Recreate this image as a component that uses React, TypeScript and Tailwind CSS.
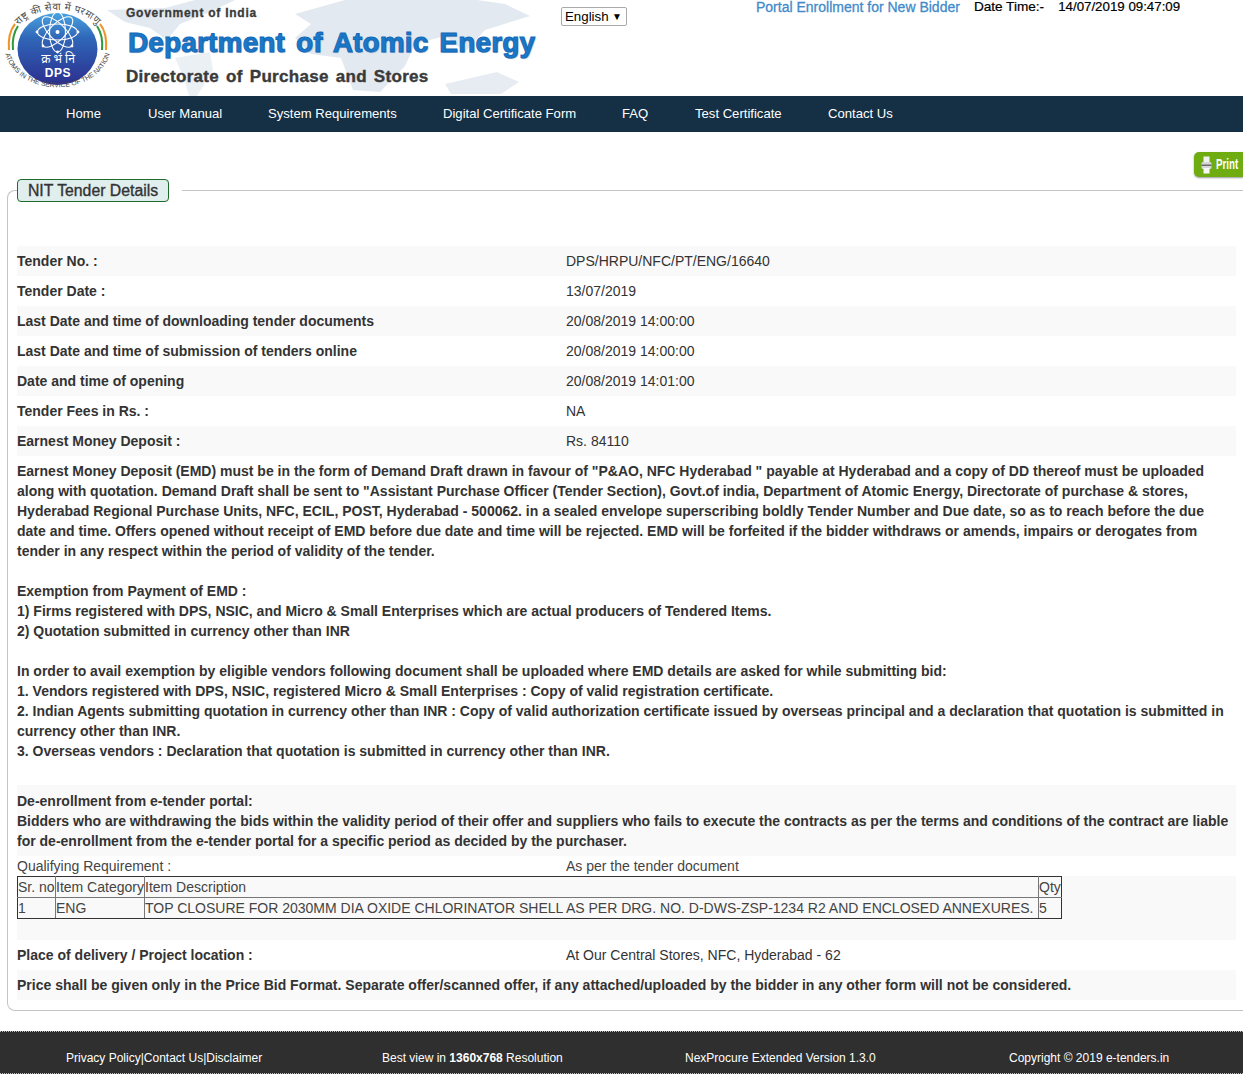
import React from "react";

const F = { fontFamily: '"Liberation Sans", Arial, sans-serif' };

function Logo() {
  return (
    <svg width="112" height="96" viewBox="0 0 112 96" className="shrink-0">
      <defs>
        <linearGradient id="lg" x1="0" y1="0" x2="0" y2="1">
          <stop offset="0" stopColor="#4aa3e0" />
          <stop offset="0.35" stopColor="#2f66b8" />
          <stop offset="1" stopColor="#2c2f8f" />
        </linearGradient>
        <path id="top" d="M13 40 A45 30 0 0 1 103 40" />
        <path id="bot" d="M5 52 A53 41 0 0 0 110 52" />
      </defs>
      <path d="M9 50 C8 38 10 30 15 24" fill="none" stroke="#f0932b" strokeWidth="2" />
      <path d="M13 50 C12 40 14 32 18 26" fill="none" stroke="#2d9a3c" strokeWidth="2" />
      <path d="M106 50 C107 38 105 30 100 24" fill="none" stroke="#f0932b" strokeWidth="2" />
      <path d="M102 50 C103 40 101 32 97 26" fill="none" stroke="#2d9a3c" strokeWidth="2" />
      <ellipse cx="57.5" cy="49" rx="40" ry="36" fill="url(#lg)" />
      <g fill="none" stroke="#fff" strokeWidth="1.1">
        <ellipse cx="57.5" cy="32" rx="8" ry="20" />
        <ellipse cx="57.5" cy="32" rx="8" ry="20" transform="rotate(45 57.5 32)" />
        <ellipse cx="57.5" cy="32" rx="8" ry="20" transform="rotate(90 57.5 32)" />
        <ellipse cx="57.5" cy="32" rx="8" ry="20" transform="rotate(135 57.5 32)" />
      </g>
      <g fill="#fff">
        <circle cx="57.5" cy="32" r="2" />
        <circle cx="37" cy="32" r="1.4" />
        <circle cx="78" cy="32" r="1.4" />
        <circle cx="43" cy="46" r="1.4" />
        <circle cx="72" cy="46" r="1.4" />
        <circle cx="57.5" cy="52" r="1.4" />
      </g>
      <text x="58" y="63" textAnchor="middle" fill="#fff" fontSize="12" style={{ fontFamily: '"Noto Sans", "Noto Sans Devanagari", sans-serif' }}>क्र भं नि</text>
      <text x="58" y="77" textAnchor="middle" fill="#fff" fontSize="12" fontWeight="700" letterSpacing="0.6" style={F}>DPS</text>
      <text fill="#4a4a4a" fontSize="10" letterSpacing="0.5" textAnchor="middle" style={{ fontFamily: '"Noto Sans", "Noto Sans Devanagari", sans-serif' }}>
        <textPath href="#top" startOffset="50%">राष्ट्र की सेवा में परमाणु</textPath>
      </text>
      <text fill="#444" fontSize="6.8" textAnchor="middle" style={F}>
        <textPath href="#bot" startOffset="50%">ATOMS IN THE SERVICE OF THE NATION</textPath>
      </text>
    </svg>
  );
}

function WorldMap() {
  return (
    <svg className="absolute left-[105px] top-0" width="440" height="96" viewBox="0 0 440 96">
      <g fill="#e3e9f0">
        <path d="M2 10 L60 8 L90 0 L130 0 L105 12 L75 24 L62 40 L45 28 L20 22Z" />
        <path d="M70 58 L105 52 L108 70 L92 96 L84 96 L78 76Z" opacity="0.7" />
        <path d="M190 14 L240 0 L372 0 L400 4 L425 16 L380 30 L360 52 L340 36 L310 44 L300 66 L275 92 L248 90 L236 58 L206 54 L190 38 L206 24Z" />
        <path d="M340 84 L392 72 L414 82 L396 94 L346 94Z" opacity="0.85" />
      </g>
    </svg>
  );
}

function PrintIcon() {
  return (
    <svg width="11" height="18" viewBox="0 0 11 18" className="shrink-0">
      <rect x="2.5" y="0.5" width="6" height="6" fill="#f2f2f2" />
      <rect x="0.5" y="6" width="10" height="7" rx="1.5" fill="#d6d6d6" />
      <rect x="0.5" y="8.5" width="10" height="1.5" fill="#6b6b6b" />
      <rect x="2.5" y="12" width="6" height="5.5" fill="#f7f7f7" />
    </svg>
  );
}

const rows: [string, string][] = [
  ["Tender No. :", "DPS/HRPU/NFC/PT/ENG/16640"],
  ["Tender Date :", "13/07/2019"],
  ["Last Date and time of downloading tender documents", "20/08/2019 14:00:00"],
  ["Last Date and time of submission of tenders online", "20/08/2019 14:00:00"],
  ["Date and time of opening", "20/08/2019 14:01:00"],
  ["Tender Fees in Rs. :", "NA"],
  ["Earnest Money Deposit :", "Rs. 84110"],
];

const nav: [string, string][] = [
  ["Home", "w-[82px]"],
  ["User Manual", "w-[120px]"],
  ["System Requirements", "w-[175px]"],
  ["Digital Certificate Form", "w-[179px]"],
  ["FAQ", "w-[73px]"],
  ["Test Certificate", "w-[133px]"],
  ["Contact Us", "w-auto"],
];

function Row({ label, value, odd }: { label: string; value: string; odd: boolean }) {
  return (
    <div className={`flex h-[30px] items-center ${odd ? "bg-[#f9f9f9]" : ""}`}>
      <div className="w-[549px] font-bold">{label}</div>
      <div>{value}</div>
    </div>
  );
}

export default function App() {
  return (
    <div className="min-h-[1090px] bg-white text-[14px] text-[#333]" style={F}>
      <header className="relative h-[96px] overflow-hidden flex">
        <WorldMap />
        <Logo />
        <div className="relative w-[434px] pl-[14px] shrink-0">
          <div className="mt-[5px] text-[12px] leading-[16px] font-bold text-[#3a3a3a] tracking-[0.75px] [-webkit-text-stroke:0.3px_#3a3a3a]">Government of India</div>
          <div
            className="mt-[1px] ml-[2px] text-[28px] leading-[42px] font-bold text-[#1b78c8] whitespace-nowrap tracking-[0.15px] [word-spacing:3px]"
            style={{ WebkitTextStroke: "1px #1269b8", textShadow: "1px 1px 1px #9fb8d2" }}
          >
            Department of Atomic Energy
          </div>
          <div className="mt-[1px] text-[17px] leading-[24px] font-bold text-[#3a3a3a] whitespace-nowrap tracking-[0.3px] [word-spacing:2px] [-webkit-text-stroke:0.4px_#3a3a3a]">Directorate of Purchase and Stores</div>
        </div>
        <div className="relative shrink-0 mt-[7px] ml-[15px] h-[19px] w-[66px] border border-[#aaa] rounded-[2px] bg-white flex items-center justify-between pl-[3px] pr-[4px] text-black text-[13.3px]">
          <span>English</span>
          <span className="text-[10px]">▼</span>
        </div>
        <div className="relative ml-[129px] flex items-start leading-[14px] whitespace-nowrap">
          <span className="text-[#428bca] font-normal [-webkit-text-stroke:0.3px_#428bca]">Portal Enrollment for New Bidder</span>
          <span className="ml-[14px] text-black text-[13.6px] [-webkit-text-stroke:0.2px_#000]">Date Time:-</span>
          <span className="ml-[14px] text-black text-[13.3px] [-webkit-text-stroke:0.2px_#000]">14/07/2019 09:47:09</span>
        </div>
      </header>

      <nav className="h-[36px] bg-[#152f44] flex items-center pl-[66px] text-white whitespace-nowrap text-[13.1px]">
        {nav.map(([t, w]) => (
          <a key={t} className={`block ${w} -mt-[1px]`}>{t}</a>
        ))}
      </nav>

      <div className="flex justify-end mt-[20px] h-[25px]">
        <div className="w-[49px] h-[25px] bg-[#6fac12] rounded-l-[5px] flex items-center pl-[7px] gap-[4px] text-white shadow-[0_1px_2px_#999]">
          <PrintIcon />
          <span className="font-bold text-[15px] inline-block origin-left scale-x-[0.65]">Print</span>
        </div>
      </div>

      <main className="relative ml-[7px] mt-[13px] h-[821px] border border-[#c4c4c4] border-r-0 rounded-l-[8px] pt-[55px] pl-[9px] pr-[7px]">
        <div className="absolute left-[9px] -top-[12px] bg-white pr-[13px]">
          <div className="h-[23px] w-[152px] bg-[#e0eeee] border border-[#1c6b2a] rounded-[4px] flex items-center justify-center text-[15.8px] text-[#333] [-webkit-text-stroke:0.35px_#333]">
            NIT Tender Details
          </div>
        </div>

        {rows.map(([l, v], i) => (
          <Row key={l} label={l} value={v} odd={i % 2 === 0} />
        ))}

        <div className="pt-[5px] pb-[24px] leading-[20px] font-bold">
          Earnest Money Deposit (EMD) must be in the form of Demand Draft drawn in favour of "P&AO, NFC Hyderabad " payable at Hyderabad and a copy of DD thereof must be uploaded along with quotation. Demand Draft shall be sent to "Assistant Purchase Officer (Tender Section), Govt.of india, Department of Atomic Energy, Directorate of purchase & stores, Hyderabad Regional Purchase Units, NFC, ECIL, POST, Hyderabad - 500062. in a sealed envelope superscribing boldly Tender Number and Due date, so as to reach before the due date and time. Offers opened without receipt of EMD before due date and time will be rejected. EMD will be forfeited if the bidder withdraws or amends, impairs or derogates from tender in any respect within the period of validity of the tender.
          <br /><br />
          Exemption from Payment of EMD :<br />
          1) Firms registered with DPS, NSIC, and Micro & Small Enterprises which are actual producers of Tendered Items.<br />
          2) Quotation submitted in currency other than INR<br /><br />
          In order to avail exemption by eligible vendors following document shall be uploaded where EMD details are asked for while submitting bid:<br />
          1. Vendors registered with DPS, NSIC, registered Micro & Small Enterprises : Copy of valid registration certificate.<br />
          2. Indian Agents submitting quotation in currency other than INR : Copy of valid authorization certificate issued by overseas principal and a declaration that quotation is submitted in currency other than INR.<br />
          3. Overseas vendors : Declaration that quotation is submitted in currency other than INR.
        </div>

        <div className="pt-[6px] pb-[5px] leading-[20px] font-bold bg-[#f9f9f9]">
          De-enrollment from e-tender portal:<br />
          Bidders who are withdrawing the bids within the validity period of their offer and suppliers who fails to execute the contracts as per the terms and conditions of the contract are liable for de-enrollment from the e-tender portal for a specific period as decided by the purchaser.
        </div>

        <div className="flex h-[20px] items-center text-[#444]">
          <div className="w-[549px]">Qualifying Requirement :</div>
          <div>As per the tender document</div>
        </div>

        <div className="h-[64px] bg-[#f9f9f9]">
          <table className="border border-[#333] border-collapse text-[#444] leading-[20px] whitespace-nowrap">
            <tbody>
              <tr>
                <td className="border border-[#777] border-l-[#333] border-t-[#333] w-[38px] p-0">Sr. no</td>
                <td className="border border-[#777] border-t-[#333] w-[89px] p-0">Item Category</td>
                <td className="border border-[#777] border-t-[#333] w-[894px] p-0">Item Description</td>
                <td className="border border-[#777] border-t-[#333] border-r-[#333] w-[23px] p-0">Qty</td>
              </tr>
              <tr>
                <td className="border border-[#777] border-l-[#333] border-b-[#333] p-0">1</td>
                <td className="border border-[#777] border-b-[#333] p-0">ENG</td>
                <td className="border border-[#777] border-b-[#333] p-0">TOP CLOSURE FOR 2030MM DIA OXIDE CHLORINATOR SHELL AS PER DRG. NO. D-DWS-ZSP-1234 R2 AND ENCLOSED ANNEXURES.</td>
                <td className="border border-[#777] border-r-[#333] border-b-[#333] p-0">5</td>
              </tr>
            </tbody>
          </table>
        </div>

        <Row label="Place of delivery / Project location :" value="At Our Central Stores, NFC, Hyderabad - 62" odd={false} />
        <div className="flex h-[30px] items-center bg-[#f9f9f9] font-bold">
          Price shall be given only in the Price Bid Format. Separate offer/scanned offer, if any attached/uploaded by the bidder in any other form will not be considered.
        </div>
      </main>

      <footer className="mt-[20px] h-[43px] bg-[#2f2f2f] border-y border-dotted border-[#bbb] text-white text-[12px] flex items-center whitespace-nowrap">
        <div className="w-[382px] pl-[66px] mt-[10px]">Privacy Policy|Contact Us|Disclaimer</div>
        <div className="w-[303px] mt-[10px]">Best view in <b>1360x768</b> Resolution</div>
        <div className="w-[324px] mt-[10px]">NexProcure Extended Version 1.3.0</div>
        <div className="mt-[10px]">Copyright © 2019 e-tenders.in</div>
      </footer>
    </div>
  );
}
